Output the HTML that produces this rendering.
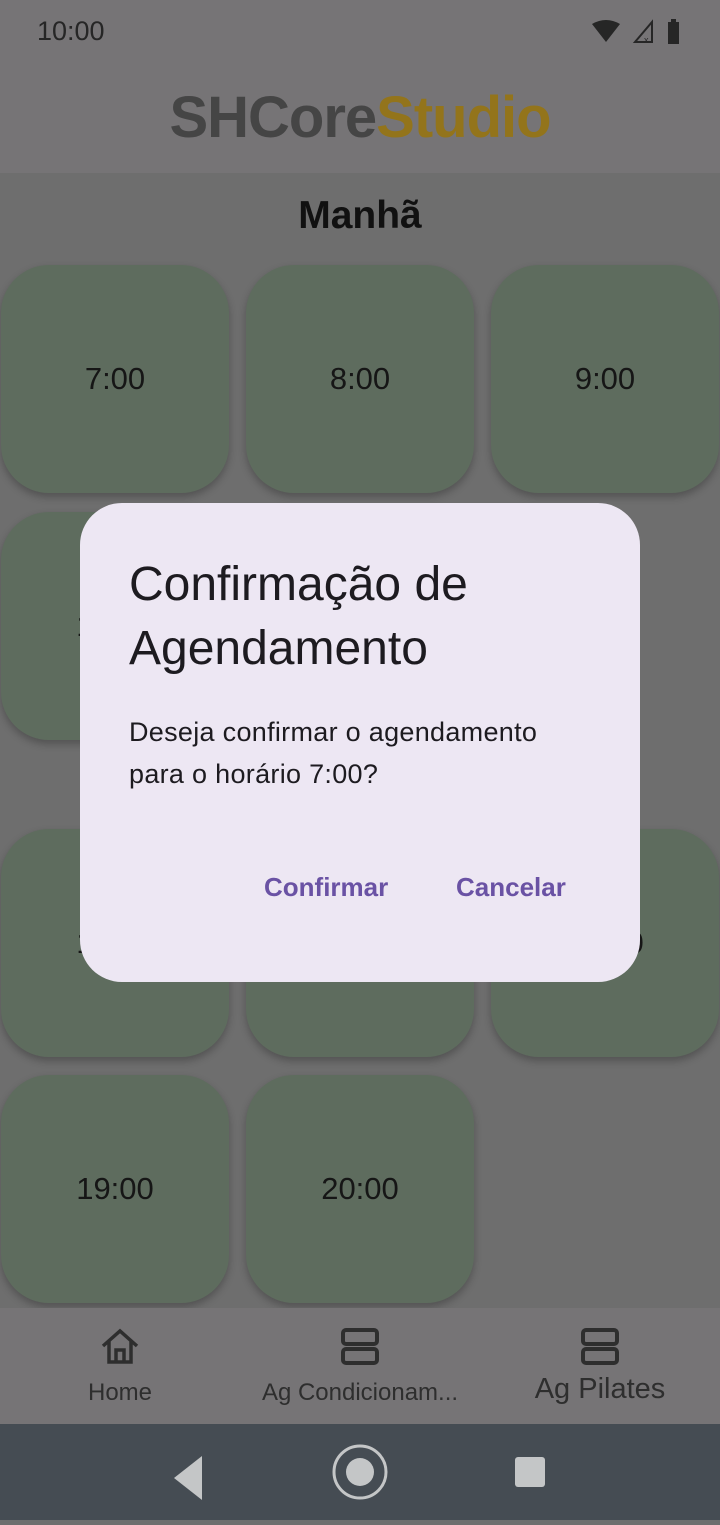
<!DOCTYPE html>
<html><head><meta charset="utf-8"><style>
*{margin:0;padding:0;box-sizing:border-box}
body{width:720px;height:1520px;overflow:hidden;background:#6e6e6e;font-family:"Liberation Sans",sans-serif;position:relative}
.top{position:absolute;left:0;top:0;width:720px;height:173px;background:#767476}
.time{position:absolute;left:37px;top:16px;font-size:27px;color:#262626}
.logo{position:absolute;left:0;width:720px;top:84px;text-align:center;font-size:58px;font-weight:bold;letter-spacing:-1px;color:#454545}
.logo span{color:#93741b}
.manha{position:absolute;left:0;width:720px;top:194px;text-align:center;font-size:39px;font-weight:bold;color:#111}
.tile{position:absolute;width:228px;height:228px;border-radius:48px;background:#5e6c5e;box-shadow:0 4px 8px rgba(0,0,0,.25);display:flex;align-items:center;justify-content:center;font-size:31px;color:#161616}
.nav{position:absolute;left:0;top:1308px;width:720px;height:116px;background:#767476}
.nl{position:absolute;font-size:24px;color:#2e2e2e;text-align:center;white-space:nowrap}
.sys{position:absolute;left:0;top:1424px;width:720px;height:96px;background:#454c53}
.dlg{position:absolute;left:80px;top:503px;width:560px;height:479px;background:#ede7f3;border-radius:42px}
.t{position:absolute;left:49px;top:50px;font-size:48px;line-height:64px;color:#1d1b20;white-space:nowrap}
.b{position:absolute;left:49px;top:208px;font-size:27px;line-height:42px;color:#1d1b20;letter-spacing:.3px;white-space:nowrap}
.btn{position:absolute;top:369px;font-size:26px;font-weight:bold;color:#6a52a4}
</style></head><body>
<div class="top">
<div class="time">10:00</div>
<svg style="position:absolute;left:590px;top:18px" width="100" height="28" viewBox="0 0 100 28">
<path d="M2 6 Q16 -2 30 6 L16 24 Z" fill="#262626"/>
<path d="M45 24 L62 4 L62 24 Z" fill="none" stroke="#262626" stroke-width="2"/>
<text x="54" y="25" font-size="9" fill="#262626">x</text>
<rect x="78" y="4" width="11" height="22" fill="#262626"/><rect x="81" y="1" width="5" height="4" fill="#262626"/>
</svg>
<div class="logo">SHCore<span>Studio</span></div>
</div>
<div class="manha">Manhã</div>
<div class="tile" style="left:1px;top:265px">7:00</div>
<div class="tile" style="left:246px;top:265px">8:00</div>
<div class="tile" style="left:491px;top:265px">9:00</div>
<div class="tile" style="left:1px;top:512px">10:00</div>
<div class="tile" style="left:246px;top:512px">11:00</div>
<div class="tile" style="left:1px;top:829px">16:00</div>
<div class="tile" style="left:246px;top:829px">17:00</div>
<div class="tile" style="left:491px;top:829px">18:00</div>
<div class="tile" style="left:1px;top:1075px">19:00</div>
<div class="tile" style="left:246px;top:1075px">20:00</div>
<div class="nav">
<svg style="position:absolute;left:100px;top:20px" width="40" height="36" viewBox="0 0 40 36"><path d="M3 18 L20 3 L37 18 M9 13 V34 H31 V13 M16 34 V22 H24 V34" fill="none" stroke="#2e2e2e" stroke-width="3.5"/></svg>
<svg style="position:absolute;left:340px;top:20px" width="40" height="38" viewBox="0 0 40 38"><rect x="3" y="2" width="34" height="14" rx="3" fill="none" stroke="#2e2e2e" stroke-width="4"/><rect x="3" y="21" width="34" height="14" rx="3" fill="none" stroke="#2e2e2e" stroke-width="4"/></svg>
<svg style="position:absolute;left:580px;top:20px" width="40" height="38" viewBox="0 0 40 38"><rect x="3" y="2" width="34" height="14" rx="3" fill="none" stroke="#2e2e2e" stroke-width="4"/><rect x="3" y="21" width="34" height="14" rx="3" fill="none" stroke="#2e2e2e" stroke-width="4"/></svg>
<div class="nl" style="left:60px;width:120px;top:71px">Home</div>
<div class="nl" style="left:220px;width:280px;top:71px">Ag Condicionam...</div>
<div class="nl" style="left:500px;width:200px;top:65px;font-size:29px">Ag Pilates</div>
</div>
<div class="sys">
<svg width="720" height="96"><path d="M202 32 V76 L174 54 Z" fill="#c4c6c7"/><circle cx="360" cy="48" r="26" fill="none" stroke="#c4c6c7" stroke-width="3"/><circle cx="360" cy="48" r="14" fill="#c4c6c7"/><rect x="515" y="33" width="30" height="30" rx="3" fill="#c4c6c7"/></svg>
</div>
<div class="dlg">
<div class="t">Confirmação de<br>Agendamento</div>
<div class="b">Deseja confirmar o agendamento<br>para o horário 7:00?</div>
<div class="btn" style="left:184px">Confirmar</div>
<div class="btn" style="left:376px">Cancelar</div>
</div>
</body></html>
